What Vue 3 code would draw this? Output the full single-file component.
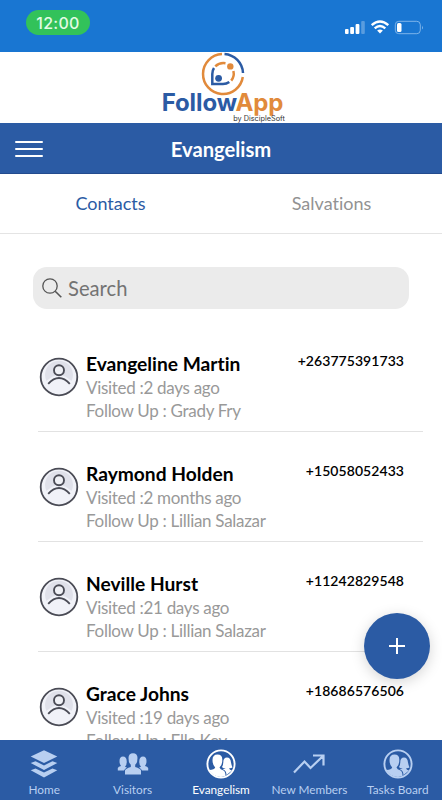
<script setup>
const contacts = [
  { name: 'Evangeline Martin', visited: '2 days ago', follow: 'Grady Fry', phone: '+263775391733' },
  { name: 'Raymond Holden', visited: '2 months ago', follow: 'Lillian Salazar', phone: '+15058052433' },
  { name: 'Neville Hurst', visited: '21 days ago', follow: 'Lillian Salazar', phone: '+11242829548' },
  { name: 'Grace Johns', visited: '19 days ago', follow: 'Ella Key', phone: '+18686576506' },
]
const tabs = [
  { label: 'Home', icon: 'layers' },
  { label: 'Visitors', icon: 'group' },
  { label: 'Evangelism', icon: 'pair', active: true },
  { label: 'New Members', icon: 'trend' },
  { label: 'Tasks Board', icon: 'pair' },
]
</script>

<template>
  <div class="screen">
    <div class="status">
      <span class="clock">12:00</span>
      <svg class="indicators" width="82" height="16" viewBox="0 0 82 16">
        <g fill="#fff">
          <rect x="1" y="10" width="3.6" height="5" rx="1" />
          <rect x="6.2" y="8" width="3.8" height="7" rx="1" />
          <rect x="11.6" y="5" width="3.8" height="10" rx="1" />
          <rect x="17.2" y="2" width="3.6" height="13" rx="1" opacity=".28" />
        </g>
        <g fill="none" stroke="#fff" stroke-width="2.4">
          <path d="M27.7 6.2Q36 -1.2 44.3 6.2" />
          <path d="M30.7 9.3Q36 4.6 41.3 9.3" />
        </g>
        <path d="M33.1 11.5Q36 9.3 38.9 11.5L36 14.6Z" fill="#fff" />
        <rect x="51.3" y="2.3" width="25" height="12.4" rx="3.5" fill="none" stroke="#7db4ea" />
        <path d="M78 6.5Q79.8 8.5 78 10.5Z" fill="#7db4ea" />
        <rect x="53" y="4" width="4.5" height="9" rx="1.5" fill="#fff" />
      </svg>
    </div>

    <div class="brand">
      <svg class="mark" width="44" height="44" viewBox="0 0 44 44" fill="none" stroke-width="2.5">
        <path d="M21 2A20 20 0 1 0 41.8 25" stroke="#e18a3b" />
        <path d="M23.5 2A20 20 0 0 1 42 21" stroke="#2b5ba4" />
        <path d="M13 16Q11.3 18.5 11.3 22V32H22Q25.5 32 28.3 30" stroke="#2b5ba4" />
        <path d="M14.3 14.3Q18.5 10.3 24.5 11.2" stroke="#e18a3b" />
        <path d="M32.4 19Q33.7 24.5 30.2 28.6" stroke="#e18a3b" />
        <circle cx="29.3" cy="14.4" r="3.2" fill="#e18a3b" />
        <circle cx="17.6" cy="26.3" r="3.4" fill="#2b5ba4" />
      </svg>
      <div class="wordmark">Follow<span>App</span></div>
      <div class="byline">by DiscipleSoft</div>
    </div>

    <header class="header">
      <div class="burger"><i></i><i></i><i></i></div>
      <h1>Evangelism</h1>
    </header>

    <nav class="segments">
      <span class="current">Contacts</span>
      <span>Salvations</span>
    </nav>

    <main class="content">
      <div class="search">
        <svg width="20" height="20" viewBox="0 0 20 20" fill="none" stroke="#555" stroke-width="1.3">
          <circle cx="8" cy="8" r="7.2" /><path d="M13.2 13.2L19.3 19.3" stroke-width="1.6" />
        </svg>
        <span>Search</span>
      </div>
      <article v-for="c in contacts" :key="c.name" class="row">
        <svg class="avatar" width="40" height="40" viewBox="0 0 40 40" fill="none" stroke="#4a4b55">
          <circle cx="20" cy="20" r="18.3" fill="#f1f2f8" stroke-width="1.8" />
          <path d="M7.5 24A14 14 0 1 1 32.5 24Q20 12 7.5 24Z" fill="#e0e1ea" stroke="none" />
          <circle cx="20" cy="13.2" r="5" fill="#eff0f5" stroke-width="1.9" />
          <path d="M9.2 26.8Q20 15.2 30.8 26.8" stroke-width="1.9" />
        </svg>
        <div class="details">
          <h2>{{ c.name }}</h2>
          <p>Visited :{{ c.visited }}</p>
          <p>Follow Up : {{ c.follow }}</p>
        </div>
        <span class="phone">{{ c.phone }}</span>
      </article>
    </main>

    <button class="add" aria-label="Add">
      <svg width="18" height="18" viewBox="0 0 18 18" stroke="#fff" stroke-width="2"><path d="M9 1V17M1 9H17" /></svg>
    </button>

    <footer class="tabbar">
      <div v-for="t in tabs" :key="t.label" class="tab" :class="{ active: t.active }">
        <svg v-if="t.icon === 'layers'" width="32" height="32" viewBox="0 0 32 32" fill="currentColor">
          <path d="M16 2.2L29.3 8.4L16 15L2.7 8.4Z" />
          <path d="M2.7 15L7.5 13.2L16 17.4L24.5 13.2L29.3 15L16 22Z" />
          <path d="M2.7 22.2L7.5 20.4L16 24.6L24.5 20.4L29.3 22.2L16 29.6Z" />
        </svg>
        <svg v-else-if="t.icon === 'group'" width="32" height="32" viewBox="0 0 32 32" fill="currentColor">
          <path d="M11.5 10Q11.5 5.2 16 5.2Q20.5 5.2 20.5 10Q20.5 15 18.2 16.8V19Q23.5 20.5 24 22.5V26.5H8V22.5Q8.5 20.5 13.8 19V16.8Q11.5 15 11.5 10Z" />
          <path d="M2.5 13Q2.5 8.5 6 8.5Q9.5 8.5 9.7 13Q10 17 8 18.5Q9 19.5 10 19.5Q7.5 21 7 22.5H.8V20Q1.5 18.5 4 18Q2.5 16.5 2.5 13Z" />
          <path d="M29.5 13Q29.5 8.5 26 8.5Q22.5 8.5 22.3 13Q22 17 24 18.5Q23 19.5 22 19.5Q24.5 21 25 22.5H31.2V20Q30.5 18.5 28 18Q29.5 16.5 29.5 13Z" />
        </svg>
        <svg v-else-if="t.icon === 'trend'" width="32" height="32" viewBox="0 0 32 32" fill="none" stroke="currentColor" stroke-width="2.2">
          <path d="M1 24.5L11.5 13.5L17.5 20L30 8M20 7.5H30.5V17.5" />
        </svg>
        <svg v-else width="32" height="32" viewBox="0 0 32 32" fill="currentColor">
          <circle cx="16" cy="16" r="13.6" fill="none" stroke="currentColor" stroke-width="1.9" />
          <path d="M7.5 12Q7.5 6.5 12.5 6.5Q17.5 6.5 17.3 12Q17.3 17.5 14.5 19.5Q15 21.5 18.5 22.5Q20.5 23.5 20.5 28L16 29Q8 28.5 4.2 22Q9.5 21.5 10.2 19.5Q7.5 17 7.5 12Z" />
          <path d="M18.3 14Q18.3 9.5 22 9.5Q25.5 9.5 26 14.5Q26.5 17.5 27.5 19.5Q26 20.5 24 20.3Q24.5 22 27 22.5L21.5 27Q21.5 22.5 17.5 21Q20.5 21 20.5 20Q17.5 20.5 17 19Q18.3 17 18.3 14Z" />
        </svg>
        <span>{{ t.label }}</span>
      </div>
    </footer>
  </div>
</template>

<style>
body { background: #fff; }
</style>

<style scoped>
* { box-sizing: border-box; }
.screen { position: relative; display: flex; flex-direction: column; height: 800px; overflow: hidden; background: #fff; font-family: Lato, sans-serif; font-variant-ligatures: none; }
.status { flex: none; height: 52px; display: flex; justify-content: space-between; align-items: flex-start; padding: 10px 16px 0 26px; background: #1976d2; }
.clock { width: 64px; height: 25px; border-radius: 13px; background: #32c25a; color: #e3fbe4; font: 500 16px/26px Inter, sans-serif; text-align: center; letter-spacing: .3px; }
.indicators { margin-top: 9px; }
.brand { flex: none; height: 71px; display: flex; flex-direction: column; align-items: center; padding-left: 3px; }
.mark { flex: none; }
.wordmark { margin-top: -4px; height: 22px; color: #2b5ba4; font: 700 24px/22px Inter, sans-serif; letter-spacing: -.1px; }
.wordmark span { color: #e18a3b; }
.byline { margin: 0 0 0 73px; color: #333; font: 7.3px/9px Inter, sans-serif; }
.header { flex: none; height: 51px; display: grid; grid-template-columns: 28px 1fr 28px; align-items: center; padding: 1px 15px 0; background: #2b5ba4; border-bottom: 1px solid #234b8e; color: #fff; }
.burger { display: grid; gap: 5px; }
.burger i { height: 2px; border-radius: 1px; background: #fff; }
h1 { margin: 0; font-size: 20.2px; font-weight: 700; line-height: 24px; text-align: center; }
.segments { flex: none; height: 60px; display: grid; grid-template-columns: 1fr 1fr; align-items: center; padding-bottom: 1px; text-align: center; border-bottom: 1px solid #e4e4e4; font-size: 18px; color: #929292; }
.segments .current { color: #2b5ba4; }
.content { flex: 1; min-height: 0; overflow: hidden; padding-top: 33px; }
.search { height: 42px; margin: 0 33px 13px; padding-left: 9px; display: flex; align-items: center; gap: 6px; border-radius: 14px; background: #ebebeb; color: #737373; font-size: 20.2px; }
.row { height: 110px; margin: 0 19px 0 38px; padding: 30px 19px 0 1px; display: flex; align-items: flex-start; border-bottom: 1px solid #e2e2e2; }
.avatar { flex: none; margin: 5px 7px 0 0; }
.details { flex: 1; color: #999; }
h2 { margin: 0 0 1px; color: #000; font-size: 19.2px; font-weight: 700; line-height: 24px; }
p { margin: 0; font-size: 17px; line-height: 22.5px; letter-spacing: -.3px; white-space: nowrap; }
.phone { color: #000; font-size: 14px; font-weight: 600; line-height: 17px; letter-spacing: .06px; }
.add { position: absolute; left: 364px; top: 613px; width: 66px; height: 66px; display: grid; place-items: center; padding: 0; border: 0; border-radius: 50%; background: #2b5ba4; box-shadow: 0 3px 14px rgba(0,0,0,.17); }
.tabbar { flex: none; height: 60px; display: grid; grid-template-columns: repeat(5, 1fr); background: #2b5ba4; }
.tab { display: flex; flex-direction: column; align-items: center; padding-top: 8px; color: #b8cff1; font-size: 11.8px; line-height: 16px; white-space: nowrap; }
.tab span { margin-top: 2px; }
.tab.active { color: #fff; }
</style>
